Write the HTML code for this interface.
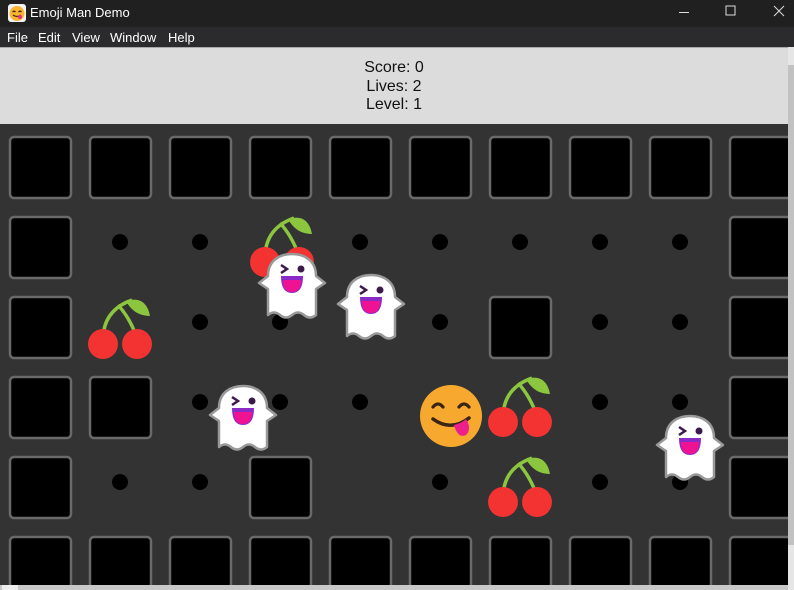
<!DOCTYPE html>
<html><head><meta charset="utf-8"><style>
html,body{margin:0;padding:0;width:794px;height:590px;overflow:hidden;background:#333;font-family:"Liberation Sans",sans-serif}
#title{position:absolute;left:0;top:0;width:794px;height:27px;background:#202020;color:#fff;font-size:13px}
#menu{position:absolute;left:0;top:27px;width:794px;height:20px;background:#2b2b2e;color:#fff;font-size:13px}
#menu span{position:absolute;top:3px}
#hdr{position:absolute;left:0;top:47px;width:788px;height:77px;background:#dcdcdc;color:#111;font-size:16px;text-align:center;line-height:18.5px;padding-top:11px;box-sizing:border-box;border-top:1px solid #aaa}
</style></head><body>
<div id="title">
<svg style="position:absolute;left:8px;top:4px" width="18" height="18" viewBox="0 0 18 18"><rect width="18" height="18" rx="3" fill="#f2f2f2"/><circle cx="9" cy="9.5" r="7.5" fill="#f8b531"/><path d="M4.5 8 q1.5-1.5 3 0 M10.5 8 q1.5-1.5 3 0 M5 11 q4 3 8 0" stroke="#4a2a1a" stroke-width="1.3" fill="none"/><ellipse cx="12" cy="13" rx="2" ry="2" fill="#e5307a"/></svg>
<span style="position:absolute;left:30px;top:5px">Emoji Man Demo</span>
<svg style="position:absolute;left:670px;top:0" width="124" height="27"><path d="M9 12.5h10" stroke="#ddd" stroke-width="1"/><rect x="726" y="6" width="9" height="9" fill="none" stroke="#ddd" transform="translate(-670 0)"/><path d="M104 6l10 10M114 6l-10 10" stroke="#ddd" stroke-width="1"/></svg>
</div>
<div id="menu"><span style="left:7px">File</span><span style="left:38px">Edit</span><span style="left:72px">View</span><span style="left:110px">Window</span><span style="left:168px">Help</span></div>
<div id="hdr">Score: 0<br>Lives: 2<br>Level: 1</div>
<div style="position:absolute;left:788px;top:47px;width:6px;height:543px;background:#e6e6e6"><div style="margin-top:18px;height:480px;background:#c2c2c2"></div></div>
<svg style="position:absolute;left:0;top:124px" width="788" height="466" viewBox="0 124 788 466">
<defs>
<rect id="w" x="-30" y="-30" width="61" height="61" rx="4" fill="#000" stroke="#6a6a6a" stroke-width="2.5"/>
<g id="c">
<path d="M-17 8 Q-16 -20 12 -30 M17 8 Q10 -12 -2 -25" stroke="#8cc63f" stroke-width="3.5" fill="none"/>
<path d="M6 -29 Q26 -35 30 -14 Q14 -14 6 -29Z" fill="#8cc63f"/>
<circle cx="-17" cy="14" r="15" fill="#f33232"/><circle cx="17" cy="14" r="15" fill="#f33232"/>
</g>
<g id="g">
<path d="M-24 30 L-24 4 L-33 -2 L-24 -9 C-24 -24 -13 -31 0 -31 C13 -31 24 -24 24 -9 L33 -2 L24 4 L24 30 Q18 35 12 30 Q6 25 0 30 Q-6 35 -12 30 Q-18 25 -24 30Z" fill="#fff" stroke="#999" stroke-width="2.5" stroke-linejoin="round"/>
<path d="M-11 -20 L-5 -16 L-11 -12" stroke="#3a1a4a" stroke-width="2.5" fill="none"/>
<circle cx="9" cy="-16" r="3.5" fill="#3a1a4a"/>
<path d="M-11 -9 L11 -9 Q11 8 0 8 Q-11 8 -11 -9Z" fill="#8a2bc8"/>
<path d="M-9 -5 L9 -5 Q9 7 0 7 Q-9 7 -9 -5Z" fill="#ef1393"/>
</g>
</defs>
<g fill="#000">
<circle cx="120" cy="242" r="8"/><circle cx="200" cy="242" r="8"/><circle cx="360" cy="242" r="8"/><circle cx="440" cy="242" r="8"/><circle cx="520" cy="242" r="8"/><circle cx="600" cy="242" r="8"/><circle cx="680" cy="242" r="8"/>
<circle cx="200" cy="322" r="8"/><circle cx="280" cy="322" r="8"/><circle cx="440" cy="322" r="8"/><circle cx="600" cy="322" r="8"/><circle cx="680" cy="322" r="8"/>
<circle cx="200" cy="402" r="8"/><circle cx="280" cy="402" r="8"/><circle cx="360" cy="402" r="8"/><circle cx="600" cy="402" r="8"/><circle cx="680" cy="402" r="8"/>
<circle cx="120" cy="482" r="8"/><circle cx="200" cy="482" r="8"/><circle cx="440" cy="482" r="8"/><circle cx="600" cy="482" r="8"/><circle cx="680" cy="482" r="8"/>
</g>
<use href="#w" x="40" y="167"/><use href="#w" x="120" y="167"/><use href="#w" x="200" y="167"/><use href="#w" x="280" y="167"/><use href="#w" x="360" y="167"/><use href="#w" x="440" y="167"/><use href="#w" x="520" y="167"/><use href="#w" x="600" y="167"/><use href="#w" x="680" y="167"/><use href="#w" x="760" y="167"/>
<use href="#w" x="40" y="247"/><use href="#w" x="760" y="247"/>
<use href="#w" x="40" y="327"/><use href="#w" x="520" y="327"/><use href="#w" x="760" y="327"/>
<use href="#w" x="40" y="407"/><use href="#w" x="120" y="407"/><use href="#w" x="760" y="407"/>
<use href="#w" x="40" y="487"/><use href="#w" x="280" y="487"/><use href="#w" x="760" y="487"/>
<use href="#w" x="40" y="567"/><use href="#w" x="120" y="567"/><use href="#w" x="200" y="567"/><use href="#w" x="280" y="567"/><use href="#w" x="360" y="567"/><use href="#w" x="440" y="567"/><use href="#w" x="520" y="567"/><use href="#w" x="600" y="567"/><use href="#w" x="680" y="567"/><use href="#w" x="760" y="567"/>
<use href="#c" x="282" y="248"/><use href="#c" x="120" y="330"/><use href="#c" x="520" y="408"/><use href="#c" x="520" y="488"/>
<use href="#g" x="292" y="285"/><use href="#g" x="371" y="306"/><use href="#g" x="243" y="417"/><use href="#g" x="690" y="447"/>
<g transform="translate(451 416)">
<circle r="31" fill="#f6a92e"/>
<path d="M-18 -9 q5 -6 10 0 M8 -9 q5 -6 10 0" stroke="#3a2414" stroke-width="3.2" fill="none" stroke-linecap="round"/>
<path d="M-18 3 Q0 16 18 2" stroke="#3a2414" stroke-width="3.5" fill="none" stroke-linecap="round"/>
<path d="M3 9 Q11 7 15 3 Q21 13 15 19 Q7 23 3 9Z" fill="#ec1f8c"/>
</g>
<rect x="0" y="585" width="788" height="5" fill="#c8c8c8"/><rect x="2" y="585" width="16" height="5" fill="#eee"/>
</svg>
</body></html>
